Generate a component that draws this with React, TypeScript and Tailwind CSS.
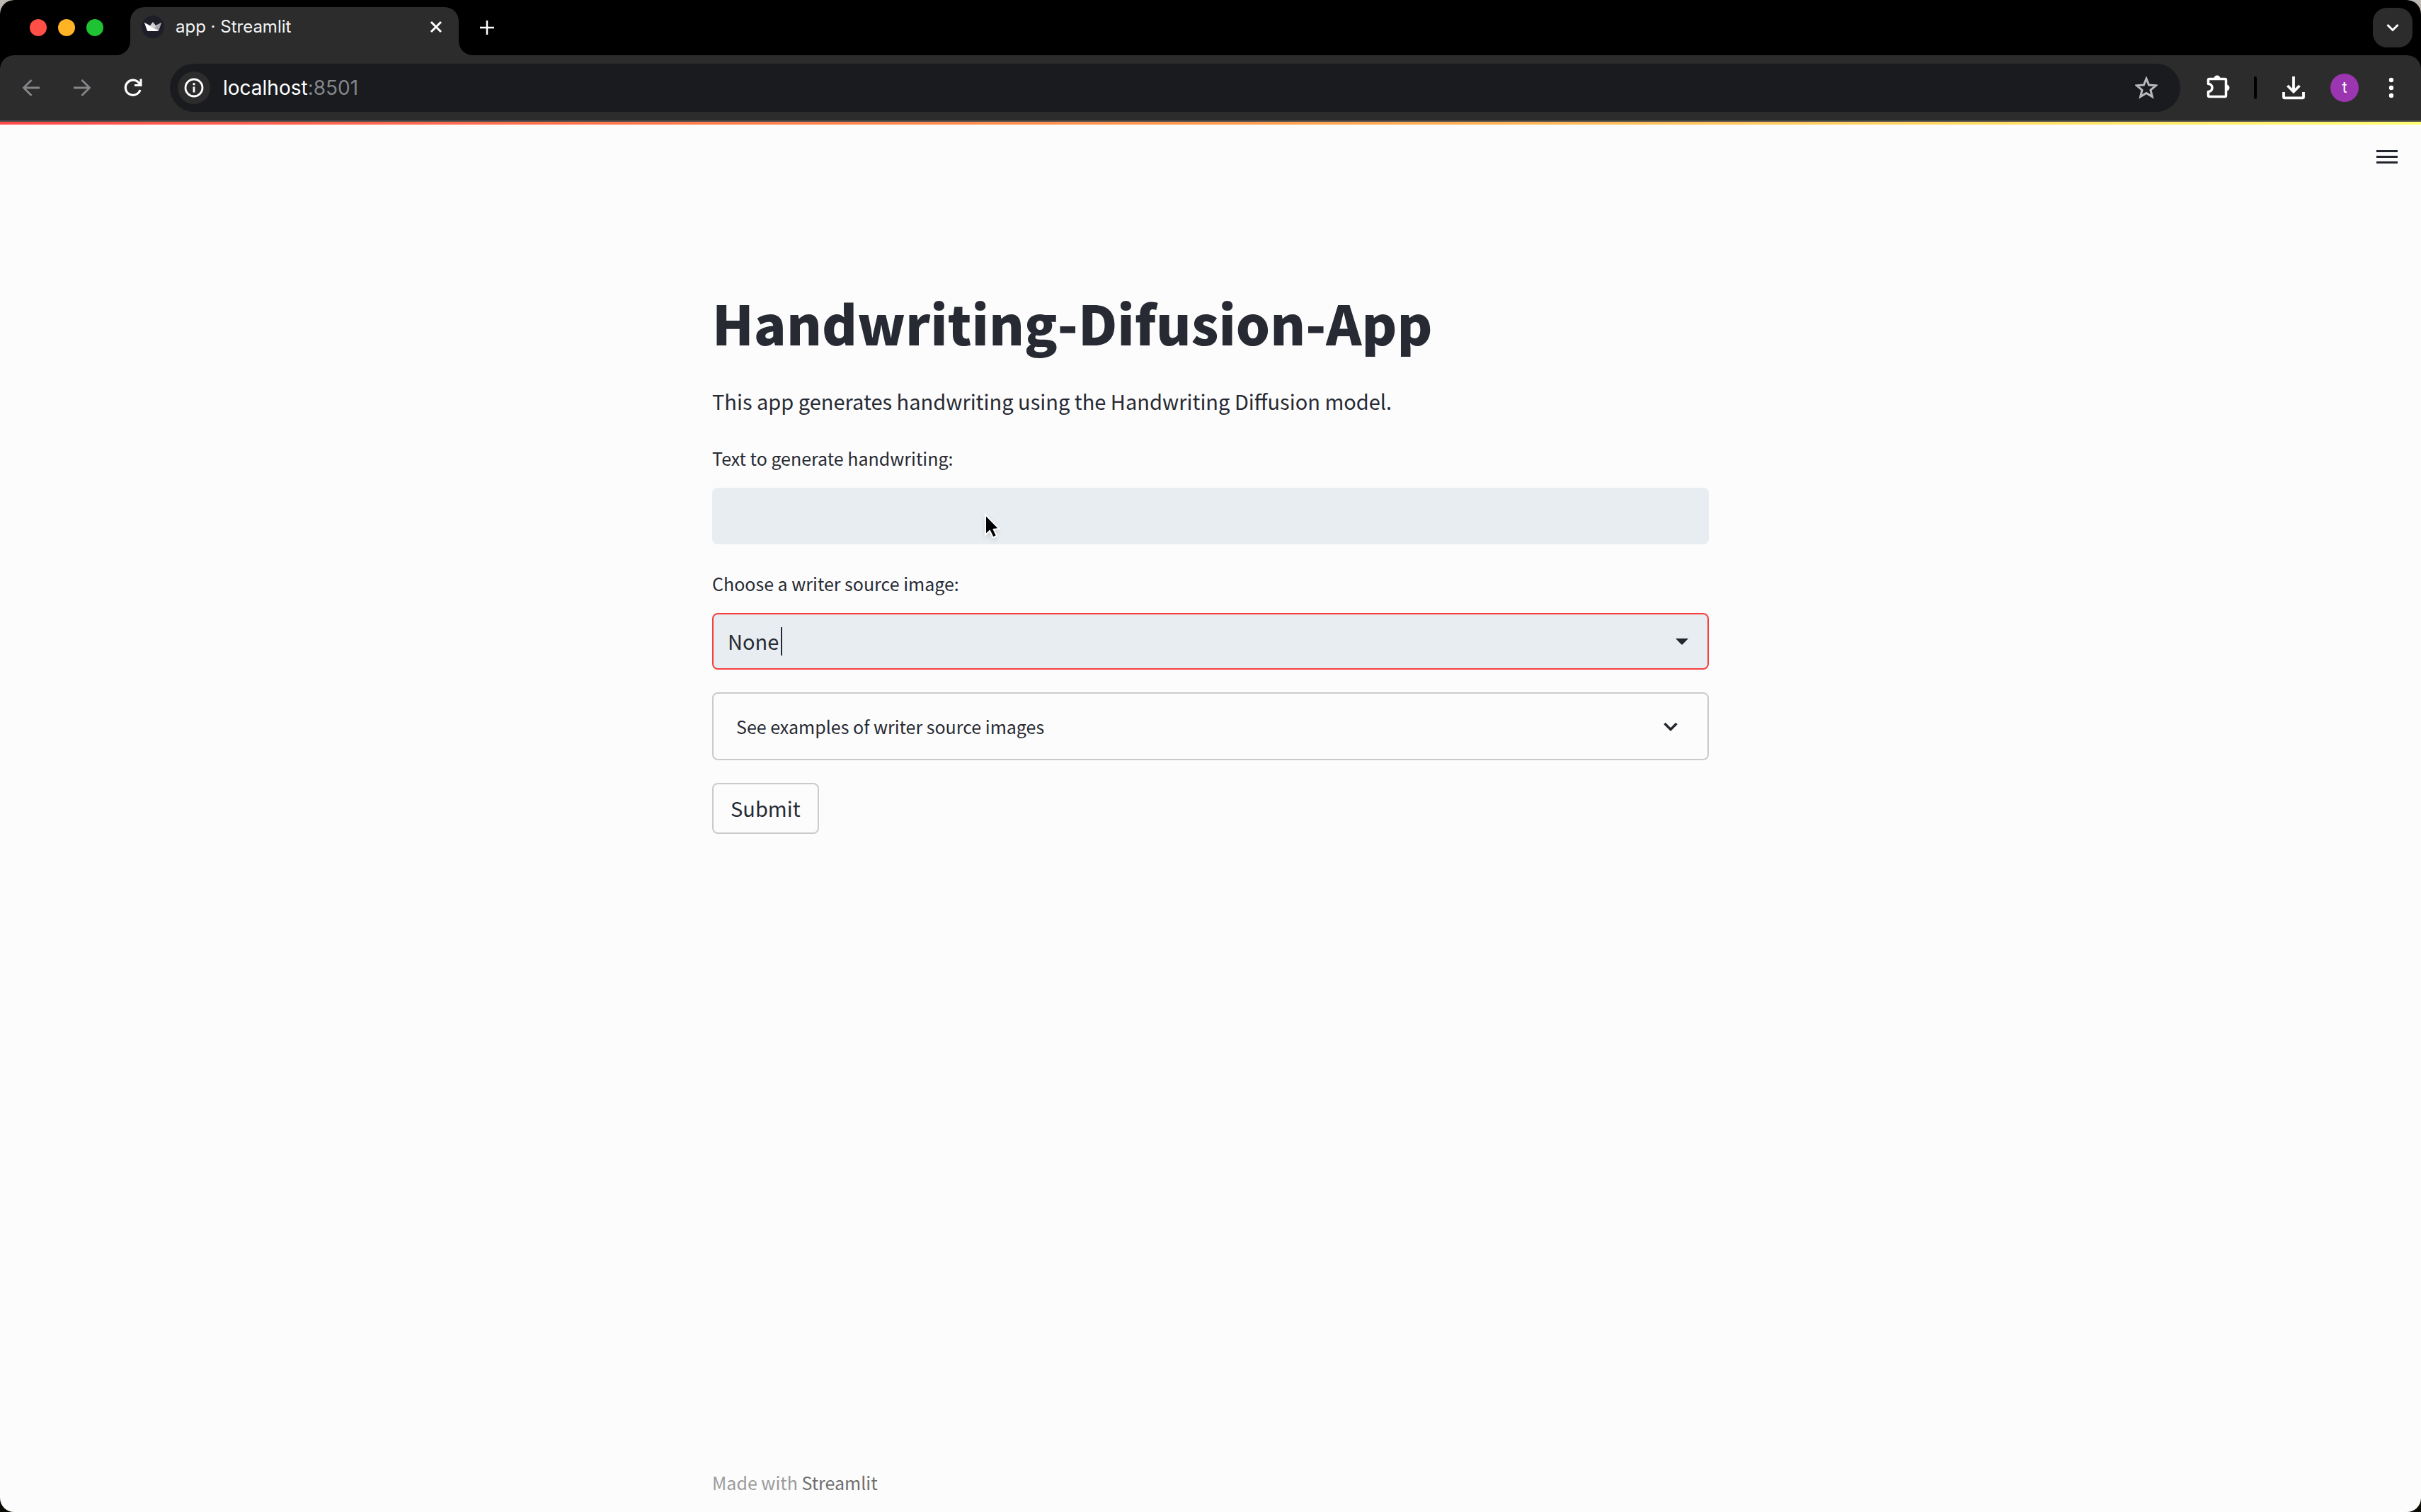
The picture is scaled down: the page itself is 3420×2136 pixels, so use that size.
import { useState, type ReactNode } from "react";

function IconButton({ label, className = "", children }: { label: string; className?: string; children: ReactNode }) {
  return (
    <button type="button" aria-label={label} className={`flex shrink-0 items-center justify-center ${className}`}>
      {children}
    </button>
  );
}

function Crown() {
  return (
    <span className="flex size-8 shrink-0 items-center justify-center rounded-full bg-[#1d1e28]">
      <svg viewBox="0 0 24 16" className="h-4 w-6">
        <path d="M0 2 L8 6 L12 1 L16 6 L24 2 L20 13 Q20 14 18.500 14 H5.500 Q4 14 4 13 Z" fill="#d0d0d4" />
        <path d="M0 2 L19.500 14 H5.500 Q4 14 4 13 Z" fill="#ffffff" />
        <path d="M24 2 L14 9 L20 13 Z" fill="#a5a5ab" />
      </svg>
    </span>
  );
}

function TabStrip() {
  return (
    <div className="flex h-[78px] items-end bg-black">
      <div className="flex h-full w-[184px] shrink-0 items-center gap-4 pl-[42px]">
        <button type="button" aria-label="Close window" className="size-6 rounded-full bg-[#ff4f46]" />
        <button type="button" aria-label="Minimise window" className="size-6 rounded-full bg-[#ffb325]" />
        <button type="button" aria-label="Zoom window" className="size-6 rounded-full bg-[#1ec232]" />
      </div>
      <div className="relative flex h-[68px] w-[464px] items-center rounded-t-[20px] bg-[#2c2c2c] pb-3 pl-4 pr-5">
        <svg viewBox="0 0 20 20" className="absolute -left-5 bottom-0 size-5">
          <path d="M20 0 V20 H0 A20 20 0 0 0 20 0 Z" fill="#2c2c2c" />
        </svg>
        <svg viewBox="0 0 20 20" className="absolute -right-5 bottom-0 size-5">
          <path d="M0 0 V20 H20 A20 20 0 0 1 0 0 Z" fill="#2c2c2c" />
        </svg>
        <Crown />
        <span className="ml-4 grow font-[Inter,sans-serif] text-[24px] leading-8 text-[#f4f4f4]">app · Streamlit</span>
        <IconButton label="Close tab" className="size-6">
          <svg viewBox="0 0 24 24" className="size-6">
            <path d="M5 5 L19 19 M19 5 L5 19" stroke="#fff" strokeWidth="3" fill="none" />
          </svg>
        </IconButton>
      </div>
      <IconButton label="New tab" className="ml-6 h-full w-8">
        <svg viewBox="0 0 24 24" className="size-6">
          <path d="M12 2 V22 M2 12 H22" stroke="#fff" strokeWidth="2.500" fill="none" />
        </svg>
      </IconButton>
      <div className="ml-auto flex h-full items-center pr-3">
        <IconButton label="Search tabs" className="size-14 rounded-[20px] bg-[#2c2c2c]">
          <svg viewBox="0 0 24 24" className="size-6">
            <path d="M4.500 8 L12 15.500 L19.500 8" stroke="#fff" strokeWidth="3" fill="none" />
          </svg>
        </IconButton>
      </div>
    </div>
  );
}

function Toolbar() {
  return (
    <div className="bg-black">
      <div className="flex h-[94px] items-center rounded-t-[20px] border-b-2 border-[#4a4a4a] bg-[#2c2c2c] pl-5 pr-[22px]">
        <IconButton label="Back" className="size-12">
          <svg viewBox="0 0 32 32" className="size-8">
            <path d="M28 16 H6 M16.500 5 L5.500 16 L16.500 27" stroke="#85858a" strokeWidth="2.800" fill="none" />
          </svg>
        </IconButton>
        <IconButton label="Forward" className="ml-6 size-12">
          <svg viewBox="0 0 32 32" className="size-8">
            <path d="M4 16 H26 M15.500 5 L26.500 16 L15.500 27" stroke="#85858a" strokeWidth="2.800" fill="none" />
          </svg>
        </IconButton>
        <IconButton label="Reload" className="ml-6 size-12">
          <svg viewBox="0 0 32 32" className="size-8">
            <path d="M26 19 A10.600 10.600 0 1 1 24.500 9.500 L27 12" stroke="#fff" strokeWidth="3.200" fill="none" />
            <path d="M28.500 3.500 V14 H18 V11 H25.500 V3.500 Z" fill="#fff" />
          </svg>
        </IconButton>
        <div className="ml-7 flex h-[68px] grow items-center rounded-full bg-[#191b1f] pl-[11px] pr-8">
          <IconButton label="View site information" className="size-[46px] rounded-full bg-[#2c2c2c]">
            <svg viewBox="0 0 28 28" className="size-7">
              <circle cx="14" cy="14" r="12" stroke="#fff" strokeWidth="2.800" fill="none" />
              <path d="M14 12.500 V20.500" stroke="#fff" strokeWidth="2.800" />
              <circle cx="14" cy="8.800" r="1.700" fill="#fff" />
            </svg>
          </IconButton>
          <div className="ml-[18px] grow font-[Inter,sans-serif] text-[28px] leading-9 text-white">
            localhost<span className="text-[#85858a]">:8501</span>
          </div>
          <IconButton label="Bookmark this tab" className="size-8">
            <svg viewBox="0 0 32 32" className="size-8">
              <path
                d="M16 3 L19.600 12 L29.500 12.800 L22 19.200 L24.300 28.500 L16 23.400 L7.700 28.500 L10 19.200 L2.500 12.800 L12.400 12 Z"
                stroke="#b9b9bd"
                strokeWidth="3"
                fill="none"
              />
            </svg>
          </IconButton>
        </div>
        <IconButton label="Extensions" className="ml-8 size-10">
          <svg viewBox="0 0 40 40" className="size-10">
            <path
              d="M7.500 9 Q7.500 7.500 9 7.500 H31 Q32.500 7.500 32.500 9 V31 Q32.500 32.500 31 32.500 H9 Q7.500 32.500 7.500 31 V25.500 A5.500 5.500 0 0 0 7.500 14.500 Z"
              stroke="#fff"
              strokeWidth="3.500"
              strokeLinejoin="round"
              fill="none"
            />
            <path d="M15.500 7 A4.500 4.500 0 0 1 24.500 7 Z M33 15.500 A4.500 4.500 0 0 1 33 24.500 Z" fill="#fff" />
          </svg>
        </IconButton>
        <span className="ml-8 h-8 w-1 shrink-0 rounded-full bg-black" />
        <IconButton label="Downloads" className="ml-8 size-10">
          <svg viewBox="0 0 40 40" className="size-10">
            <path d="M20 4 V25 M11.500 17 L20 25.500 L28.500 17" stroke="#fff" strokeWidth="3.800" fill="none" />
            <path d="M6 26 V33 Q6 34.300 7.300 34.300 H32.700 Q34 34.300 34 33 V26" stroke="#fff" strokeWidth="3.800" fill="none" />
          </svg>
        </IconButton>
        <IconButton label="Profile" className="ml-8 size-10 rounded-full bg-[#9b35b0]">
          <span className="font-[Roboto,sans-serif] text-[22px] leading-6 text-white">t</span>
        </IconButton>
        <IconButton label="Browser menu" className="ml-[26px] size-10">
          <svg viewBox="0 0 40 40" className="size-10">
            <circle cx="20" cy="9" r="3.200" fill="#fff" />
            <circle cx="20" cy="20" r="3.200" fill="#fff" />
            <circle cx="20" cy="31" r="3.200" fill="#fff" />
          </svg>
        </IconButton>
      </div>
    </div>
  );
}

function Pointer() {
  return (
    <svg viewBox="0 0 24 40" className="pointer-events-none absolute left-[384px] top-9 h-10 w-6 drop-shadow-md">
      <path
        d="M2 2 V30.500 L8.200 24.800 L12.800 34.500 L18 32 L13.700 22.800 L21.500 22 Z"
        fill="#000"
        stroke="#fff"
        strokeWidth="2"
      />
    </svg>
  );
}

export default function App() {
  const [text, setText] = useState("");
  const [writer, setWriter] = useState("None");

  return (
    <div className="min-h-screen bg-linear-to-b from-[#bdb9b0] to-[#0c0c04]">
      <div className="flex min-h-screen flex-col overflow-hidden rounded-[20px] bg-[#fcfcfc]">
        <TabStrip />
        <Toolbar />
        <div className="h-1 bg-linear-to-r from-[#ff4b4b] via-[#ff9b52] to-[#fffd70]" />
        <div className="flex grow flex-col font-['Noto_Sans_CJK_SC',sans-serif] text-[#272a33]">
          <header className="flex justify-end px-7 pt-6">
            <IconButton label="Main menu" className="size-10">
              <svg viewBox="0 0 40 40" className="size-10">
                <path d="M5 13.500 H35 M5 21.500 H35 M5 29.500 H35" stroke="#24262e" strokeWidth="3.200" />
              </svg>
            </IconButton>
          </header>
          <main className="mx-auto w-full max-w-[1408px] grow pt-[162px]">
            <h1 className="text-[76px] font-black leading-[106px]">Handwriting-Difusion-App</h1>
            <p className="mt-8 text-[29px] leading-[52px]">
              This app generates handwriting using the Handwriting Diffusion model.
            </p>
            <form onSubmit={(event) => event.preventDefault()}>
              <label htmlFor="prompt" className="mt-[35px] block text-[25px] leading-10">
                Text to generate handwriting:
              </label>
              <div className="relative mt-[22px]">
                <input
                  id="prompt"
                  type="text"
                  value={text}
                  onChange={(event) => setText(event.target.value)}
                  className="block h-20 w-full rounded-lg bg-[#e7edf0] px-6 text-[29px] outline-none"
                />
                <Pointer />
              </div>
              <label htmlFor="writer" className="mt-[35px] block text-[25px] leading-10">
                Choose a writer source image:
              </label>
              <div className="relative mt-[22px]">
                <select
                  id="writer"
                  value={writer}
                  onChange={(event) => setWriter(event.target.value)}
                  className="block h-20 w-full appearance-none rounded-lg border-2 border-[#f5413f] bg-[#e7edf0] px-5 text-[29px] outline-none"
                >
                  <option>None</option>
                </select>
                <span className="pointer-events-none absolute left-[97px] top-5 h-10 w-0.5 bg-[#272a33]" />
                <svg viewBox="0 0 20 12" className="pointer-events-none absolute right-7 top-[35px] h-3 w-5">
                  <path d="M1 1 H19 L11 9.300 Q10 10.200 9 9.300 Z" fill="#24262e" />
                </svg>
              </div>
              <button
                type="button"
                aria-expanded="false"
                className="mt-8 flex h-24 w-full items-center justify-between rounded-lg border-2 border-[#cbcbc9] px-8 text-[25px] leading-10"
              >
                See examples of writer source images
                <svg viewBox="0 0 40 40" className="size-10">
                  <path d="M11.500 16 L20 24.500 L28.500 16" stroke="#24262e" strokeWidth="3.400" fill="none" />
                </svg>
              </button>
              <button
                type="submit"
                className="mt-8 flex h-[72px] items-center rounded-lg border-2 border-[#cbcbc9] px-6 pb-0.5 text-[29px] leading-10"
              >
                Submit
              </button>
            </form>
          </main>
          <footer className="mx-auto w-full max-w-[1408px] pb-[22px] text-[25px] leading-10 text-[#9b9b9b]">
            Made with{" "}
            <a href="#streamlit" className="text-[#6e6e70]">
              Streamlit
            </a>
          </footer>
        </div>
      </div>
    </div>
  );
}
